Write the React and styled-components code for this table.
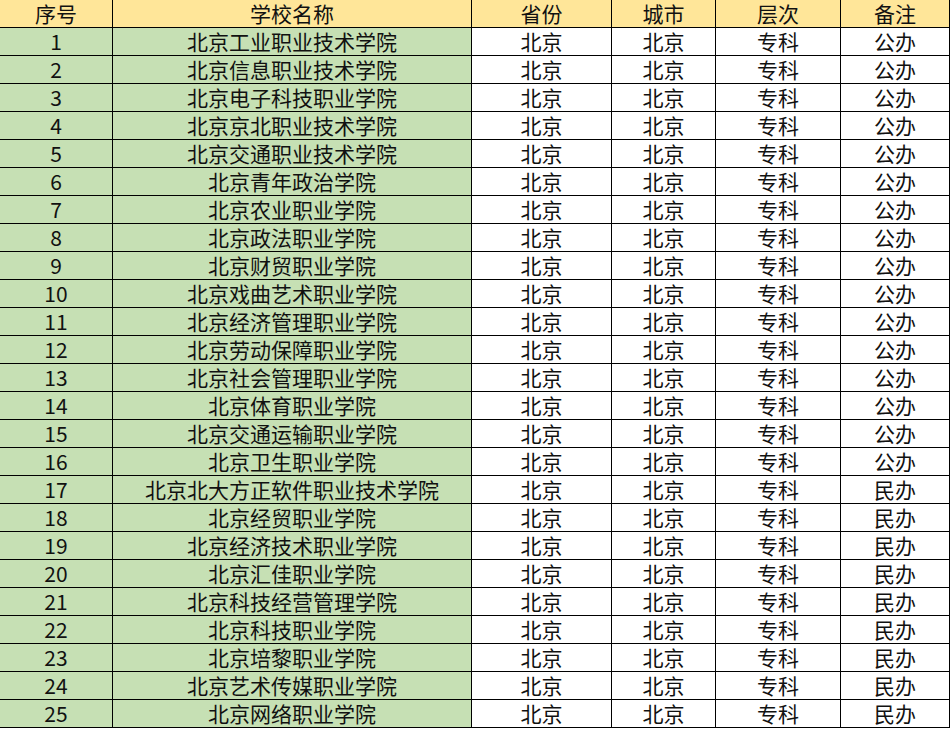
import React from "react";
import styled, { createGlobalStyle } from "styled-components";

const Global = createGlobalStyle`
  html, body { margin: 0; padding: 0; background: #ffffff; }
  body { font-family: "Noto Sans CJK SC", "Noto Sans", sans-serif; }
`;

const Table = styled.div`
  display: grid;
  grid-template-columns: 113px 359px 140px 104px 125px 109px;
  width: 950px;
`;

const Cell = styled.div`
  box-sizing: border-box;
  height: 28px;
  border-right: 1px solid #000;
  border-bottom: 1px solid #000;
  display: flex;
  align-items: center;
  justify-content: center;
  font-family: "Noto Sans CJK SC", "Noto Sans", sans-serif;
  font-size: 21px;
  line-height: 27px;
  color: #111;
  white-space: nowrap;
  overflow: visible;
  background: ${(p) => (p.$head ? "#FFE699" : p.$green ? "#C6E0B4" : "#FFFFFF")};
`;

const headers = ["序号", "学校名称", "省份", "城市", "层次", "备注"];

const schools = [
  "北京工业职业技术学院",
  "北京信息职业技术学院",
  "北京电子科技职业学院",
  "北京京北职业技术学院",
  "北京交通职业技术学院",
  "北京青年政治学院",
  "北京农业职业学院",
  "北京政法职业学院",
  "北京财贸职业学院",
  "北京戏曲艺术职业学院",
  "北京经济管理职业学院",
  "北京劳动保障职业学院",
  "北京社会管理职业学院",
  "北京体育职业学院",
  "北京交通运输职业学院",
  "北京卫生职业学院",
  "北京北大方正软件职业技术学院",
  "北京经贸职业学院",
  "北京经济技术职业学院",
  "北京汇佳职业学院",
  "北京科技经营管理学院",
  "北京科技职业学院",
  "北京培黎职业学院",
  "北京艺术传媒职业学院",
  "北京网络职业学院",
];

export default function App() {
  return (
    <>
      <Global />
      <Table>
        {headers.map((h) => (
          <Cell key={h} $head>
            {h}
          </Cell>
        ))}
        {schools.map((s, i) => (
          <React.Fragment key={s}>
            <Cell $green>{i + 1}</Cell>
            <Cell $green>{s}</Cell>
            <Cell>北京</Cell>
            <Cell>北京</Cell>
            <Cell>专科</Cell>
            <Cell>{i < 16 ? "公办" : "民办"}</Cell>
          </React.Fragment>
        ))}
      </Table>
    </>
  );
}
